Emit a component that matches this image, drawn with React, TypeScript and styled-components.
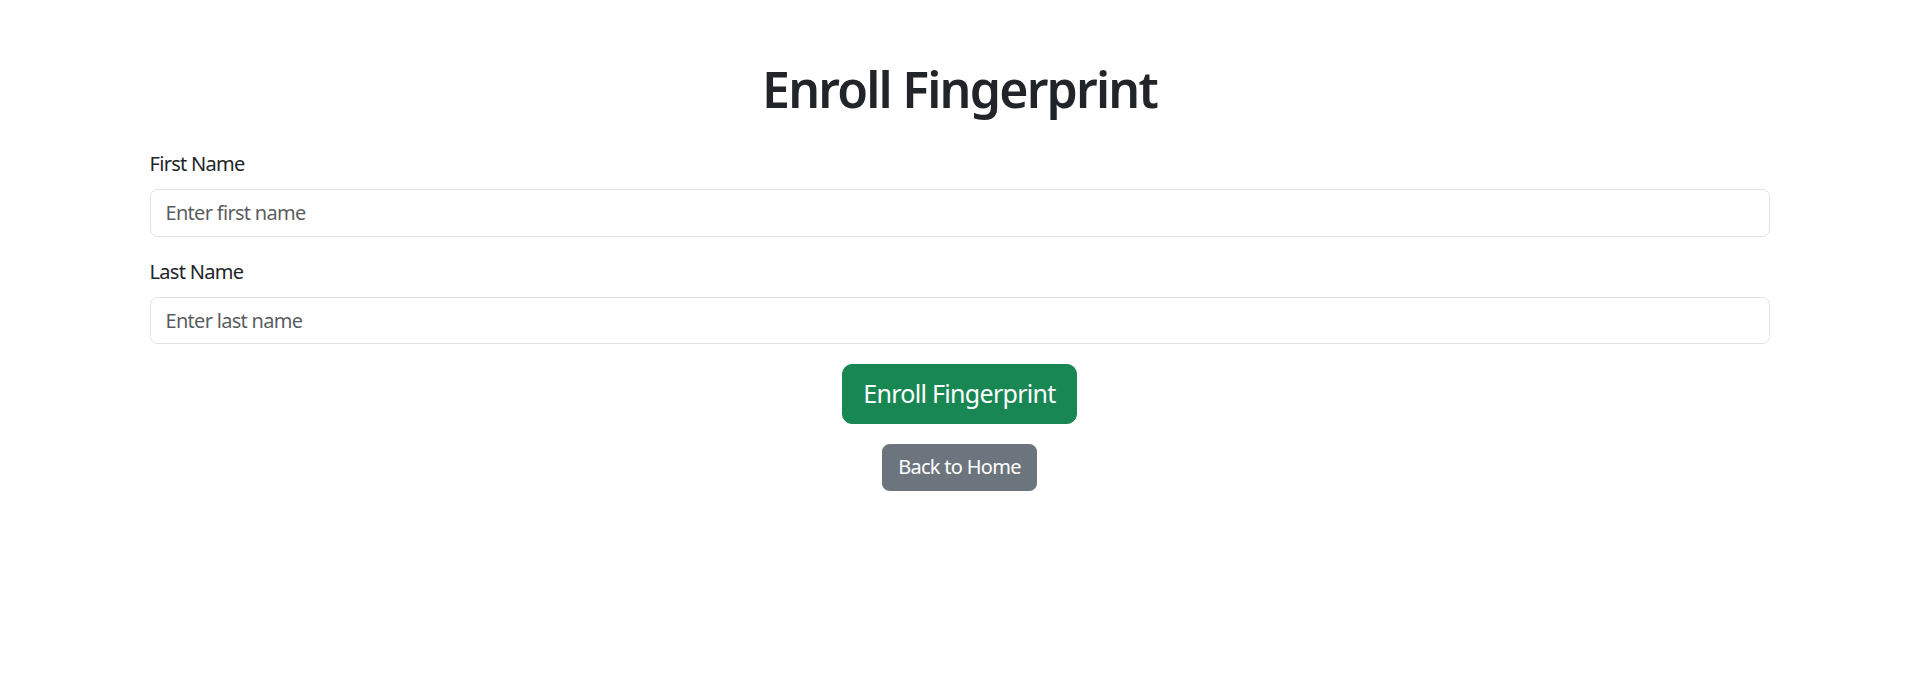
import React from "react";
import styled, { createGlobalStyle } from "styled-components";

const Global = createGlobalStyle`
  * { box-sizing: border-box; }
  body {
    margin: 0;
    background: #fff;
    color: #212529;
    font-family: "Noto Sans", "Open Sans", Arial, sans-serif;
    font-size: 20px;
    line-height: 1.5;
    letter-spacing: -0.035em;
  }
`;

const Container = styled.div`
  max-width: 1650px;
  margin: 59px auto 0;
  padding: 0 15px;
`;

const Title = styled.h1`
  margin: 0 0 30px;
  text-align: center;
  font-size: 50px;
  font-weight: 600;
  line-height: 1.2;
  letter-spacing: -0.036em;
  color: #212529;
`;

const Form = styled.form`
  display: flex;
  flex-direction: column;
`;

const Group = styled.div`
  display: flex;
  flex-direction: column;
  margin-bottom: 20px;
`;

const Label = styled.label`
  font-size: 20px;
  line-height: 30px;
  margin-bottom: 10px;
`;

const Input = styled.input`
  display: block;
  width: 100%;
  height: 47.5px;
  padding: 7.5px 15px;
  font-family: inherit;
  font-size: 20px;
  line-height: 30px;
  letter-spacing: inherit;
  color: #212529;
  background: #fff;
  border: 1.25px solid #dee2e6;
  border-radius: 7.5px;
  outline: none;
  &::placeholder {
    color: rgba(33, 37, 41, 0.75);
  }
`;

const Actions = styled.div`
  display: flex;
  flex-direction: column;
  align-items: center;
  gap: 20px;
`;

const Button = styled.button<{ $variant: "success" | "secondary"; $large?: boolean }>`
  font-family: inherit;
  font-weight: 400;
  letter-spacing: inherit;
  color: #fff;
  border: 1.25px solid ${(p) => (p.$variant === "success" ? "#198754" : "#6c757d")};
  background: ${(p) => (p.$variant === "success" ? "#198754" : "#6c757d")};
  font-size: ${(p) => (p.$large ? "25px" : "20px")};
  line-height: 1.5;
  padding: ${(p) => (p.$large ? "10px 20px" : "7.5px 15px")};
  border-radius: ${(p) => (p.$large ? "10px" : "7.5px")};
  cursor: pointer;
`;

export default function App() {
  return (
    <>
      <Global />
      <Container>
        <Title>Enroll Fingerprint</Title>
        <Form onSubmit={(e) => e.preventDefault()}>
          <Group>
            <Label htmlFor="first">First Name</Label>
            <Input id="first" placeholder="Enter first name" />
          </Group>
          <Group>
            <Label htmlFor="last">Last Name</Label>
            <Input id="last" placeholder="Enter last name" />
          </Group>
          <Actions>
            <Button type="submit" $variant="success" $large>
              Enroll Fingerprint
            </Button>
            <Button type="button" $variant="secondary">
              Back to Home
            </Button>
          </Actions>
        </Form>
      </Container>
    </>
  );
}
